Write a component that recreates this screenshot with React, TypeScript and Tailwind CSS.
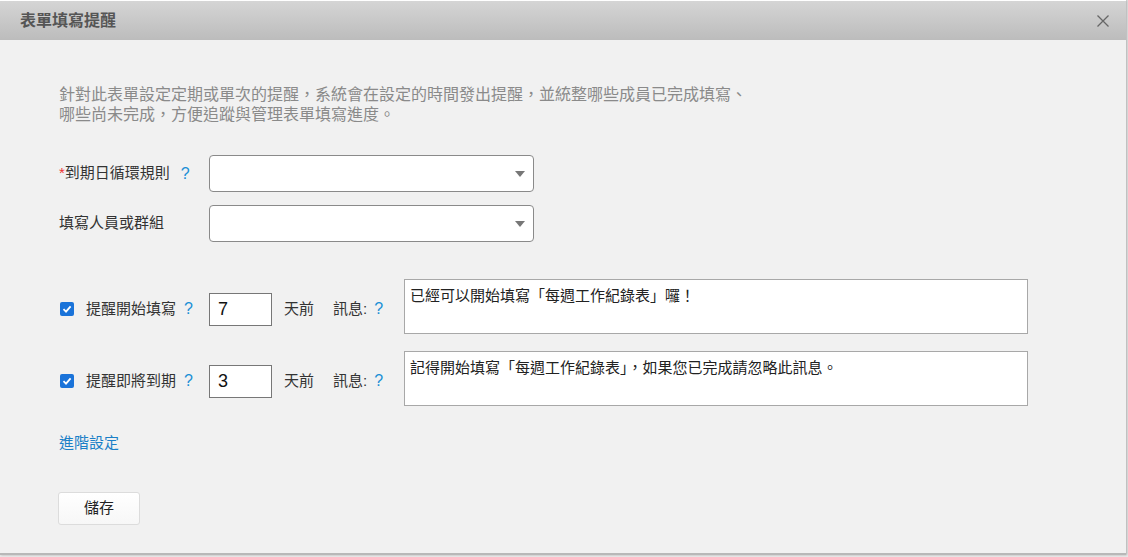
import React from "react";

const font = { fontFamily: '"Liberation Sans", "Noto Sans CJK TC", sans-serif' };

function Help({ className = "" }: { className?: string }) {
  return <span className={`text-[16px] text-[#1a8fd6] ${className}`}>?</span>;
}

function Select() {
  return (
    <div className="relative w-[325px] h-[37px] bg-white border border-[#8a8a8a] rounded-[4px]">
      <span className="absolute right-[8px] top-[15px] w-0 h-0 border-l-[5px] border-r-[5px] border-t-[6px] border-l-transparent border-r-transparent border-t-[#777]" />
    </div>
  );
}

function Check() {
  return (
    <span className="w-[14px] h-[14px] rounded-[2px] bg-[#1a73d9] flex items-center justify-center">
      <svg width="10" height="10" viewBox="0 0 10 10">
        <path d="M1.5 5.2 L4 7.6 L8.6 2.4" fill="none" stroke="white" strokeWidth="1.8" />
      </svg>
    </span>
  );
}

function ReminderRow({ label, days, msg }: { label: string; days: string; msg: string }) {
  return (
    <div className="flex h-[55px] mt-[1px]">
      <div className="flex items-center pt-[5px]">
        <div className="w-[150px] flex items-center">
          <span className="ml-[1px]"><Check /></span>
          <span className="ml-[12px] text-[15px] text-[#333]">{label}</span>
          <Help className="ml-[8px]" />
        </div>
        <div className="w-[63px] h-[33px] bg-white border border-[#777] flex items-center px-[8px] text-[18px] text-[#111]">
          {days}
        </div>
        <span className="ml-[12px] text-[15px] text-[#333]">天前</span>
        <span className="ml-[19px] text-[15px] text-[#333]">訊息:</span>
        <Help className="ml-[7px]" />
      </div>
      <div className="ml-[21px] w-[624px] bg-white border border-[#a8a8a8] px-[5px] pt-[5px] text-[15px] text-[#222]">
        {msg}
      </div>
    </div>
  );
}

export default function App() {
  return (
    <div className="w-[1128px] h-[557px] bg-[#e8e8e8]" style={font}>
      <div className="w-[1126px] h-[555px] bg-[#f1f1f1] flex flex-col border-b-[2px] border-[#b8b8b8] shadow-[1px_0_2px_rgba(0,0,0,0.25)]">
        <div className="h-[40px] border-t border-white bg-gradient-to-b from-[#d5d5d5] to-[#bcbcbc] flex items-center justify-between pl-[20px] pr-[16px]">
          <span className="text-[16px] font-bold text-[#555]">表單填寫提醒</span>
          <svg width="14" height="14" viewBox="0 0 14 14">
            <path d="M1.5 1.5 L12.5 12.5 M12.5 1.5 L1.5 12.5" stroke="#666" strokeWidth="1.3" />
          </svg>
        </div>
        <div className="pl-[59px] pt-[45px]">
          <p className="text-[16px] leading-[20px] text-[#8a8a8a] w-[760px]">
            針對此表單設定定期或單次的提醒，系統會在設定的時間發出提醒，並統整哪些成員已完成填寫、
            <br />
            哪些尚未完成，方便追蹤與管理表單填寫進度。
          </p>
          <div className="mt-[30px] flex items-center">
            <div className="w-[150px] flex items-center text-[15px] text-[#333]">
              <span className="text-[#e33]">*</span>
              <span>到期日循環規則</span>
              <Help className="ml-[11px]" />
            </div>
            <Select />
          </div>
          <div className="mt-[13px] flex items-center">
            <div className="w-[150px] text-[15px] text-[#333]">填寫人員或群組</div>
            <Select />
          </div>
          <div className="mt-[36px] flex flex-col gap-[16px]">
            <ReminderRow label="提醒開始填寫" days="7" msg="已經可以開始填寫「每週工作紀錄表」囉！" />
            <ReminderRow label="提醒即將到期" days="3" msg="記得開始填寫「每週工作紀錄表」，如果您已完成請忽略此訊息。" />
          </div>
          <div className="mt-[26px] text-[15px] text-[#1a7fc7]">進階設定</div>
          <button className="mt-[37px] -ml-[1px] w-[82px] h-[33px] rounded-[3px] border border-[#dcdcdc] bg-gradient-to-b from-white to-[#f7f7f7] text-[15px] text-[#222]">
            儲存
          </button>
        </div>
      </div>
    </div>
  );
}
